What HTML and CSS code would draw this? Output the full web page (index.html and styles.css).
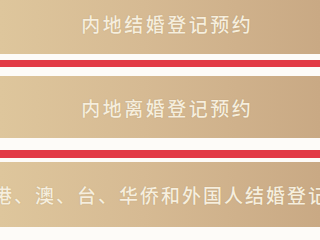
FILE: index.html
```html
<!DOCTYPE html>
<html lang="zh-CN">
<head>
  <meta charset="UTF-8" />
  <meta name="viewport" content="width=device-width, initial-scale=1.0" />
  <title>婚姻登记预约</title>
  <link rel="stylesheet" href="styles.css">
</head>
<body>
  <div class="menu">
    <a class="btn btn-first" href="#">内地结婚登记预约</a>
    <div class="rule rule-one"><span class="line"></span></div>
    <a class="btn" href="#">内地离婚登记预约</a>
    <div class="rule rule-two"><span class="line"></span></div>
    <a class="btn btn-wide" href="#">港、澳、台、华侨和外国人结婚登记</a>
  </div>
</body>
</html>
```

FILE: styles.css
```css
html, body {
  margin: 0;
  background: #fdfbf8;
  overflow: hidden;
}
.menu {
  width: 320px;
  margin-top: -8px;
  display: flex;
  flex-direction: column;
}
.btn {
  height: 62px;
  padding-left: 12px;
  display: flex;
  align-items: center;
  justify-content: center;
  white-space: nowrap;
  overflow: hidden;
  text-decoration: none;
  font-family: "Noto Sans CJK SC", "Noto Sans", sans-serif;
  font-size: 19px;
  font-weight: 500;
  letter-spacing: 2.5px;
  text-indent: 2.5px;
  color: #f6eedd;
  text-shadow: 0 0 1px rgba(120, 90, 50, 0.35);
  background: linear-gradient(90deg, #dec69c 0%, #d6ba93 45%, #c9a984 100%);
}
.btn-first {
  height: 62px;
}
.btn-wide {
  height: 65px;
  padding-left: 0;
  letter-spacing: 2px;
  text-indent: 2px;
}
.rule {
  background: #fdfbf8;
  display: flex;
  flex-direction: column;
}
.line {
  display: block;
  background: #e23a45;
}
.rule-one {
  padding: 6px 0 9px;
}
.rule-one .line {
  height: 7px;
}
.rule-two {
  padding: 12px 0 4px;
}
.rule-two .line {
  height: 8px;
}
```
